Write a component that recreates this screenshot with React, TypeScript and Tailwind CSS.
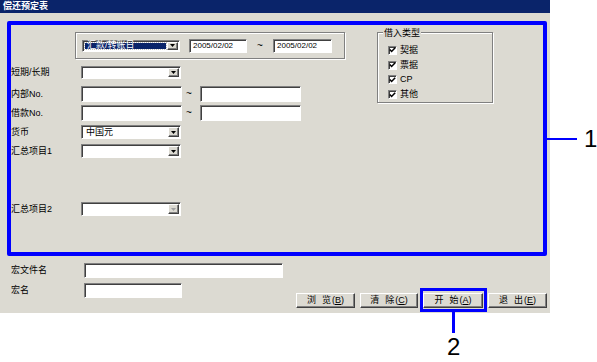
import React from 'react';

const sunken =
  'border border-t-[#808080] border-l-[#808080] border-r-white border-b-white shadow-[inset_1px_1px_0_#404040]';
const raised =
  'border border-t-white border-l-white border-r-[#404040] border-b-[#404040] shadow-[inset_-1px_-1px_0_#808080]';
const etched = 'border border-[#808080] shadow-[1px_1px_0_#fff,inset_1px_1px_0_#fff]';

function Arrow({ disabled }: { disabled?: boolean }) {
  return (
    <span className={`flex h-full w-[11px] shrink-0 items-center justify-center bg-[#dcdad2] ${raised}`}>
      <svg width="5" height="3" viewBox="0 0 5 3">
        <path d="M0 0h5L2.5 3z" fill={disabled ? '#a0a0a0' : '#000'} />
      </svg>
    </span>
  );
}

function Combo({
  width,
  height,
  value,
  selected,
  disabled,
}: {
  width: string;
  height: string;
  value?: string;
  selected?: boolean;
  disabled?: boolean;
}) {
  return (
    <div className={`flex ${width} ${height} bg-white p-px ${sunken}`}>
      <div className="flex flex-1 items-center p-px">
        {selected ? (
          <span className="flex h-full flex-1 items-center bg-[#0a246a] pl-[2px] text-[9px] leading-none text-white outline-1 outline-dotted outline-[#c0c0c0]">
            {value}
          </span>
        ) : (
          <span className="pl-[2px] text-[9px] leading-none">{value}</span>
        )}
      </div>
      <Arrow disabled={disabled} />
    </div>
  );
}

function Field({ width, height, value }: { width: string; height: string; value?: string }) {
  return (
    <div className={`flex ${width} ${height} items-center bg-white pl-[3px] text-[8px] leading-none ${sunken}`}>
      {value}
    </div>
  );
}

function Row({ label, className, children }: { label: string; className: string; children: React.ReactNode }) {
  return (
    <div className={`flex items-center ${className}`}>
      <span className="w-[70px] text-[9px] leading-none">{label}</span>
      {children}
    </div>
  );
}

function Tilde() {
  return <span className="w-[18px] pl-[4px] text-[10px] leading-none">~</span>;
}

function Check({ label }: { label: string }) {
  return (
    <div className="flex h-[15px] items-center gap-[3px]">
      <span className={`flex size-[9px] items-center justify-center bg-white ${sunken}`}>
        <svg width="7" height="6" viewBox="0 0 7 6">
          <path d="M0.8 2.6l1.8 1.9 3.6-3.8" stroke="#000" strokeWidth="1.5" fill="none" />
        </svg>
      </span>
      <span className="text-[9px] leading-none">{label}</span>
    </div>
  );
}

function Btn({ width, a, b, hot }: { width: string; a: string; b: string; hot: string }) {
  return (
    <button className={`flex ${width} h-[15px] items-center justify-center bg-[#dcdad2] text-[9px] leading-none ${raised}`}>
      <span>{a}</span>
      <span className="ml-[6px]">{b}</span>
      <span className="ml-[1px]">
        (<u>{hot}</u>)
      </span>
    </button>
  );
}

export default function App() {
  return (
    <div className="relative h-[362px] w-[597px] overflow-hidden bg-white text-black [font-family:'Liberation_Sans','Noto_Sans_CJK_SC',sans-serif]">
      <div className="flex h-[313px] w-[550px] flex-col bg-[#dcdad2]">
        <div className="h-[13px] bg-[#0a246a] pl-[3px] text-[9px] font-bold leading-[13px] text-white">偿还预定表</div>

        <div className="flex flex-col pl-[11px] pr-[3px] pt-[19px]">
          <div className="flex items-start">
            <div className="flex w-[366px] flex-col">
              <div className={`ml-[64px] flex h-[27px] w-[270px] items-center pl-[6px] ${etched}`}>
                <Combo width="w-[98px]" height="h-[12px]" value="汇款/转账日" selected />
                <div className="ml-[9px]">
                  <Field width="w-[58px]" height="h-[14px]" value="2005/02/02" />
                </div>
                <span className="w-[26px] text-center text-[10px] leading-none">~</span>
                <Field width="w-[59px]" height="h-[14px]" value="2005/02/02" />
              </div>

              <Row label="短期/长期" className="mt-[7px] h-[13px]">
                <Combo width="w-[100px]" height="h-[13px]" />
              </Row>
              <Row label="内部No." className="mt-[7px] h-[16px]">
                <Field width="w-[101px]" height="h-[16px]" />
                <Tilde />
                <Field width="w-[101px]" height="h-[16px]" />
              </Row>
              <Row label="借款No." className="mt-[3px] h-[16px]">
                <Field width="w-[101px]" height="h-[16px]" />
                <Tilde />
                <Field width="w-[101px]" height="h-[16px]" />
              </Row>
              <Row label="货币" className="mt-[4px] h-[14px]">
                <Combo width="w-[100px]" height="h-[14px]" value="中国元" />
              </Row>
              <Row label="汇总项目1" className="mt-[5px] h-[14px]">
                <Combo width="w-[100px]" height="h-[14px]" />
              </Row>
              <Row label="汇总项目2" className="mt-[44px] h-[14px]">
                <Combo width="w-[100px]" height="h-[14px]" disabled />
              </Row>
            </div>

            <div className={`relative flex h-[71px] w-[116px] flex-col pl-[10px] pt-[10px] ${etched}`}>
              <span className="absolute -top-[6px] left-[5px] bg-[#dcdad2] px-[1px] text-[9px] leading-[12px]">借入类型</span>
              <Check label="契据" />
              <Check label="票据" />
              <Check label="CP" />
              <Check label="其他" />
            </div>
          </div>

          <div className="mt-[47px] flex items-end">
            <div className="flex flex-col pb-[10px]">
              <div className="flex h-[15px] items-center">
                <span className="w-[73px] text-[9px] leading-none">宏文件名</span>
                <Field width="w-[199px]" height="h-[15px]" />
              </div>
              <div className="mt-[5px] flex h-[15px] items-center">
                <span className="w-[73px] text-[9px] leading-none">宏名</span>
                <Field width="w-[98px]" height="h-[15px]" />
              </div>
            </div>
            <div className="ml-auto flex gap-[5px]">
              <Btn width="w-[59px]" a="浏" b="览" hot="B" />
              <Btn width="w-[58px]" a="清" b="除" hot="C" />
              <Btn width="w-[60px]" a="开" b="始" hot="A" />
              <Btn width="w-[59px]" a="退" b="出" hot="E" />
            </div>
          </div>
        </div>
      </div>

      {/* callout annotations */}
      <div className="absolute left-[7px] top-[21px] h-[235px] w-[540px] rounded-[2px] border-4 border-[#0000ff]" />
      <div className="absolute left-[547px] top-[138px] h-[2px] w-[30px] bg-[#0000ff]" />
      <span className="absolute left-[584px] top-[127px] text-[24px] leading-none">1</span>
      <div className="absolute left-[420px] top-[288px] h-[24px] w-[67px] border-[3px] border-[#0000ff]" />
      <div className="absolute left-[452px] top-[311px] h-[22px] w-[3px] bg-[#0000ff]" />
      <span className="absolute left-[447px] top-[335px] text-[24px] leading-none">2</span>
    </div>
  );
}
